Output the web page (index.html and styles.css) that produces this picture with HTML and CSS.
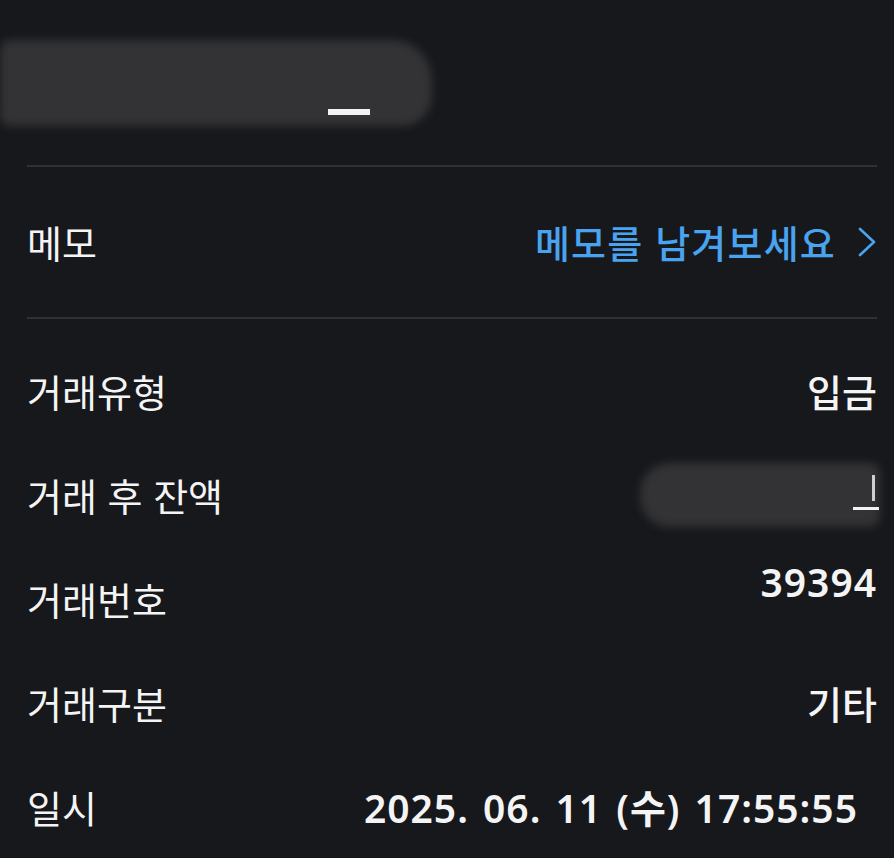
FILE: index.html
```html
<!DOCTYPE html>
<html lang="ko">
<head>
<meta charset="utf-8">
<title>거래 상세</title>
<link rel="stylesheet" href="styles.css">
</head>
<body>
<div class="page">
  <div class="header">
    <div class="blur-wrap">
      <div class="blur blur-title"></div>
      <span class="mark mark-title"></span>
    </div>
  </div>
  <div class="divider"></div>
  <div class="memo-row">
    <span class="label">메모</span>
    <span class="memo-link">메모를 남겨보세요
      <svg class="chev" width="18" height="30" viewBox="0 0 18 30"><polyline points="2,2 16,15 2,28" fill="none" stroke="#4aa3ee" stroke-width="2.6" stroke-linecap="round" stroke-linejoin="round"/></svg>
    </span>
  </div>
  <div class="divider"></div>
  <div class="list">
    <div class="row"><span class="label">거래유형</span><span class="value">입금</span></div>
    <div class="row">
      <span class="label">거래 후 잔액</span>
      <span class="value blur-wrap">
        <span class="blur blur-balance"></span>
        <span class="mark mark-v"></span>
        <span class="mark mark-h"></span>
      </span>
    </div>
    <div class="row"><span class="label">거래번호</span><span class="value num raised">39394</span></div>
    <div class="row"><span class="label">거래구분</span><span class="value">기타</span></div>
    <div class="row"><span class="label">일시</span><span class="value num date">2025. 06. 11 (수) 17:55:55</span></div>
  </div>
</div>
</body>
</html>
```

FILE: styles.css
```css
html, body {
  margin: 0;
  padding: 0;
  background: #17181c;
}
body {
  font-family: "Noto Sans CJK KR", "Noto Sans", sans-serif;
  color: #f4f4f5;
  overflow: hidden;
}
.page {
  width: 894px;
  height: 858px;
  box-sizing: border-box;
  padding: 0 17px 0 27px;
}
.header {
  height: 165px;
  margin-left: -27px;
  box-sizing: border-box;
  padding-top: 40px;
}
.blur-wrap {
  position: relative;
  display: block;
}
.blur {
  display: block;
  background: #333335;
  filter: blur(4px);
}
.blur-title {
  width: 432px;
  height: 86px;
  border-radius: 10px 40px 30px 10px;
}
.mark {
  position: absolute;
  background: #f2f2f2;
}
.mark-title {
  left: 328px;
  top: 69px;
  width: 42px;
  height: 6px;
}
.divider {
  height: 2px;
  background: #303135;
}
.memo-row {
  height: 150px;
  display: flex;
  align-items: center;
  justify-content: space-between;
}
.label {
  font-size: 38px;
  font-weight: 400;
  line-height: 1;
}
.memo-link {
  display: flex;
  align-items: center;
  gap: 22px;
  font-size: 38px;
  font-weight: 500;
  color: #4aa3ee;
  line-height: 1;
  letter-spacing: 1.2px;
}
.chev {
  display: block;
  margin-right: 1px;
}
.list {
  padding-top: 20px;
}
.row {
  height: 104px;
  display: flex;
  align-items: center;
  justify-content: space-between;
}
.value {
  font-size: 38px;
  font-weight: 500;
  line-height: 1;
}
.num {
  font-family: "Noto Sans", "Noto Sans CJK KR", sans-serif;
  font-size: 39px;
  font-weight: 600;
  letter-spacing: 1px;
}
.raised {
  position: relative;
  top: -18px;
}
.date {
  margin-right: 19px;
  word-spacing: 3px;
}
.value.blur-wrap {
  width: 240px;
  height: 64px;
  margin-right: -3px;
}
.blur-balance {
  width: 240px;
  height: 64px;
  border-radius: 30px 10px 10px 30px;
}
.mark-v {
  right: 5px;
  top: 12px;
  width: 3px;
  height: 26px;
  background: #cfcfcf;
}
.mark-h {
  right: 1px;
  top: 44px;
  width: 26px;
  height: 3px;
}
```
